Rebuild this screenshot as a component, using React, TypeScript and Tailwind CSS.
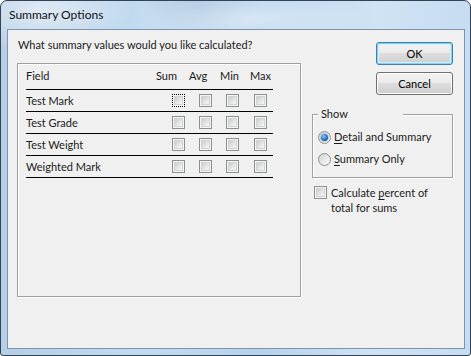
import React from 'react';

const font = "font-['Lato','Noto_Sans',sans-serif]";

const Check: React.FC<{ focus?: boolean }> = ({ focus }) => (
  <span
    className={`block w-[13px] h-[13px] p-[1px] bg-[#f4f4f4] border ${
      focus ? 'border-dotted border-black' : 'border-[#8e8f8f]'
    }`}
  >
    <span className="block w-full h-full border border-[#d2d3d5] bg-[linear-gradient(135deg,#c9cbce_0%,#e2e3e5_50%,#f7f7f7_100%)]" />
  </span>
);

const Radio: React.FC<{ checked?: boolean }> = ({ checked }) => (
  <span className="flex items-center justify-center w-[13px] h-[13px] rounded-full border border-[#8e8f8f] bg-[linear-gradient(135deg,#d0d2d4_0%,#ebebeb_60%,#fafafa_100%)]">
    {checked && (
      <span className="block w-[7px] h-[7px] rounded-full bg-[radial-gradient(circle_at_40%_35%,#8fc4f0_0%,#2d6fb6_55%,#153f73_100%)] shadow-[0_0_0_1px_#a9cbe9]" />
    )}
  </span>
);

const rows = ['Test Mark', 'Test Grade', 'Test Weight', 'Weighted Mark'];

const Button: React.FC<{ label: string; isDefault?: boolean }> = ({ label, isDefault }) => (
  <div
    className={`w-[77px] h-[23px] rounded-[3px] border flex items-center justify-center text-black bg-[linear-gradient(180deg,#f2f2f2_0%,#ebebeb_48%,#dddddd_50%,#cfcfcf_100%)] ${
      isDefault
        ? 'border-[#3c7fb1] shadow-[inset_0_0_0_1px_#7fd3f5,inset_0_0_0_2px_#d6eefb]'
        : 'border-[#707070] shadow-[inset_0_0_0_1px_#fcfcfc]'
    }`}
  >
    {label}
  </div>
);

export default function App() {
  return (
    <div className={`w-[471px] h-[356px] ${font} text-[11px] leading-[16px] text-[#1a1a1a]`}>
      <div className="w-full h-full flex flex-col rounded-t-[7px] rounded-b-[3px] border border-[#334355] pl-[6px] pr-[5px] pb-[6px] bg-[radial-gradient(ellipse_90px_40px_at_40px_10px,rgba(255,255,255,0.55),transparent),radial-gradient(ellipse_120px_30px_at_250px_18px,rgba(255,255,255,0.45),transparent),radial-gradient(ellipse_60px_26px_at_200px_6px,rgba(140,170,200,0.35),transparent),linear-gradient(90deg,#b7cfe6_0%,#c3dbf0_30%,#b6d2ec_55%,#d0e3f4_80%,#c6dcf1_100%)]">
        <div className="h-[28px] pl-[2px] pt-[6px] text-[12px] text-[#111]">Summary Options</div>
        <div className="flex-1 border border-[#7b95b0] bg-[#f0f0f0] flex">
          {/* left column */}
          <div className="ml-[9px] w-[284px] flex flex-col">
            <div className="mt-[7px] pl-[1px]">What summary values would you like calculated?</div>
            <div className="mt-[10px] h-[234px] border border-[#a0a0a0] shadow-[1px_1px_0_#fff,inset_1px_1px_0_#fff] pl-[8px]">
              <div className="w-[247px]">
                <div className="h-[26px] pt-[4px] border-b border-black flex">
                  <span className="w-[130px]">Field</span>
                  <span className="w-[33px]">Sum</span>
                  <span className="w-[31px]">Avg</span>
                  <span className="w-[30px]">Min</span>
                  <span>Max</span>
                </div>
                {rows.map((r, i) => (
                  <div key={r} className="h-[22px] border-b border-black flex items-center">
                    <span className="w-[146px]">{r}</span>
                    <span className="w-[27px]"><Check focus={i === 0} /></span>
                    <span className="w-[27px]"><Check /></span>
                    <span className="w-[28px]"><Check /></span>
                    <span><Check /></span>
                  </div>
                ))}
              </div>
            </div>
          </div>
          {/* right column */}
          <div className="ml-[11px] w-[141px] flex flex-col">
            <div className="mt-[12px] flex flex-col items-end gap-[7px]">
              <Button label="OK" isDefault />
              <Button label="Cancel" />
            </div>
            <div className="relative mt-[19px] h-[64px] border border-[#a0a0a0] shadow-[1px_1px_0_#fff,inset_1px_1px_0_#fff]">
              <span className="absolute left-[5px] top-[-9px] w-[85px] pl-[3px] bg-[#f0f0f0]">Show</span>
              <div className="pt-[14px] pl-[5px] flex flex-col gap-[6px]">
                <div className="h-[16px] flex items-center gap-[3px]">
                  <Radio checked />
                  <span><span className="underline underline-offset-2">D</span>etail and Summary</span>
                </div>
                <div className="h-[16px] flex items-center gap-[3px]">
                  <Radio />
                  <span><span className="underline underline-offset-2">S</span>ummary Only</span>
                </div>
              </div>
            </div>
            <div className="mt-[7px] pl-[2px] flex items-start gap-[4px]">
              <span className="mt-[1px]"><Check /></span>
              <div className="leading-[15px]">
                <div>Calculate <span className="underline underline-offset-2">p</span>ercent of</div>
                <div>total for sums</div>
              </div>
            </div>
          </div>
        </div>
      </div>
    </div>
  );
}
